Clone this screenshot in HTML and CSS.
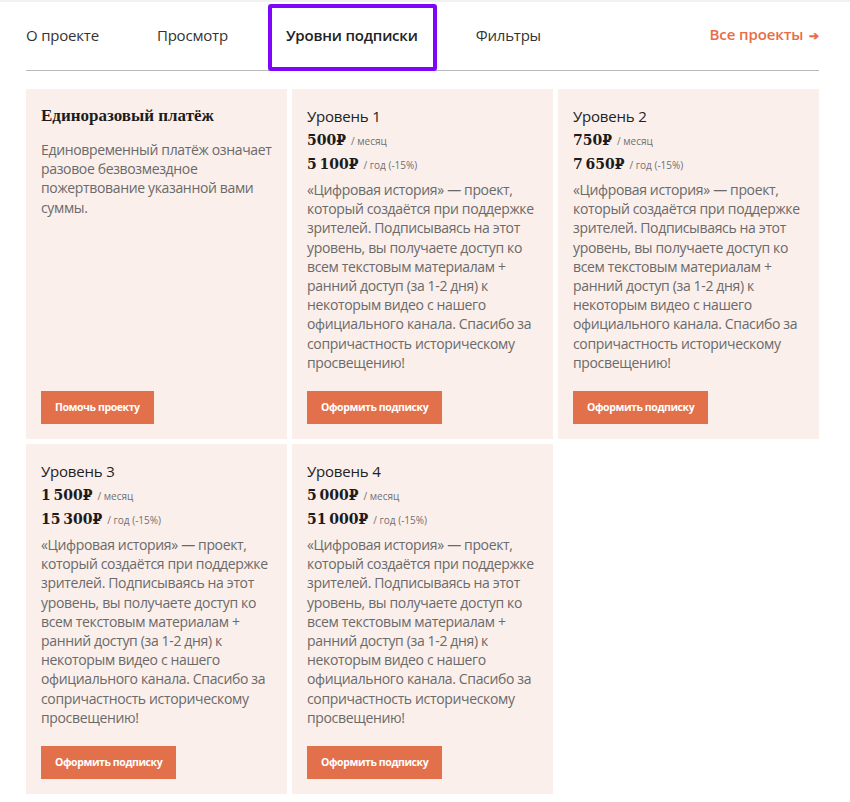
FILE: index.html
```html
<!DOCTYPE html>
<html lang="ru">
<head>
<meta charset="utf-8">
<title>Уровни подписки</title>
<link rel="stylesheet" href="styles.css">
</head>
<body>
<div class="page">
  <nav class="tabs">
    <a class="tab">О проекте</a>
    <a class="tab">Просмотр</a>
    <a class="tab tab-active">Уровни подписки</a>
    <a class="tab">Фильтры</a>
    <a class="tab-all">Все проекты <span class="arrow">➔</span></a>
  </nav>

  <div class="grid">
    <div class="card">
      <h3 class="card-heading">Единоразовый платёж</h3>
      <p class="card-text">Единовременный платёж означает разовое безвозмездное пожертвование указанной вами суммы.</p>
      <a class="btn">Помочь проекту</a>
    </div>

    <div class="card">
      <div class="card-title">Уровень 1</div>
      <div class="price"><b>500₽</b><span class="unit">/ месяц</span></div>
      <div class="price"><b>5&#8239;100₽</b><span class="unit">/ год (-15%)</span></div>
      <p class="card-text">«Цифровая история» — проект, который создаётся при поддержке зрителей. Подписываясь на этот уровень, вы получаете доступ ко всем текстовым материалам + ранний доступ (за 1-2 дня) к некоторым видео с нашего официального канала. Спасибо за сопричастность историческому просвещению!</p>
      <a class="btn">Оформить подписку</a>
    </div>

    <div class="card">
      <div class="card-title">Уровень 2</div>
      <div class="price"><b>750₽</b><span class="unit">/ месяц</span></div>
      <div class="price"><b>7&#8239;650₽</b><span class="unit">/ год (-15%)</span></div>
      <p class="card-text">«Цифровая история» — проект, который создаётся при поддержке зрителей. Подписываясь на этот уровень, вы получаете доступ ко всем текстовым материалам + ранний доступ (за 1-2 дня) к некоторым видео с нашего официального канала. Спасибо за сопричастность историческому просвещению!</p>
      <a class="btn">Оформить подписку</a>
    </div>

    <div class="card">
      <div class="card-title">Уровень 3</div>
      <div class="price"><b>1&#8239;500₽</b><span class="unit">/ месяц</span></div>
      <div class="price"><b>15&#8239;300₽</b><span class="unit">/ год (-15%)</span></div>
      <p class="card-text">«Цифровая история» — проект, который создаётся при поддержке зрителей. Подписываясь на этот уровень, вы получаете доступ ко всем текстовым материалам + ранний доступ (за 1-2 дня) к некоторым видео с нашего официального канала. Спасибо за сопричастность историческому просвещению!</p>
      <a class="btn">Оформить подписку</a>
    </div>

    <div class="card">
      <div class="card-title">Уровень 4</div>
      <div class="price"><b>5&#8239;000₽</b><span class="unit">/ месяц</span></div>
      <div class="price"><b>51&#8239;000₽</b><span class="unit">/ год (-15%)</span></div>
      <p class="card-text">«Цифровая история» — проект, который создаётся при поддержке зрителей. Подписываясь на этот уровень, вы получаете доступ ко всем текстовым материалам + ранний доступ (за 1-2 дня) к некоторым видео с нашего официального канала. Спасибо за сопричастность историческому просвещению!</p>
      <a class="btn">Оформить подписку</a>
    </div>
  </div>
</div>
</body>
</html>
```
FILE: styles.css
```css
html, body {
  margin: 0;
  padding: 0;
  background: #ffffff;
}
body {
  font-family: "Open Sans", "Noto Sans", sans-serif;
  color: #222;
  border-top: 2px solid #f1f1f1;
}
.page {
  padding: 0 31px 0 26px;
}
.tabs {
  display: flex;
  align-items: center;
  gap: 58px;
  height: 69px;
  box-sizing: border-box;
  padding-bottom: 3px;
  border-bottom: 1px solid #b9b9b9;
}
.tab {
  position: relative;
  font-size: 15px;
  line-height: 20px;
  letter-spacing: -0.2px;
  color: #333;
  cursor: pointer;
}
.tab-active {
  font-weight: 600;
  color: #222;
}
.tab-active::after {
  content: "";
  position: absolute;
  left: -18px;
  right: -19px;
  top: -21px;
  bottom: -26px;
  border: 4px solid #7f06fb;
  border-radius: 3px;
}
.tab-all {
  margin-left: auto;
  font-size: 15px;
  line-height: 20px;
  font-weight: 600;
  letter-spacing: -0.1px;
  color: #e86d45;
  cursor: pointer;
}
.arrow {
  font-size: 12px;
  margin-left: 2px;
}
.grid {
  display: grid;
  grid-template-columns: repeat(3, 1fr);
  gap: 5px;
  margin-top: 18px;
}
.card {
  display: flex;
  flex-direction: column;
  align-items: flex-start;
  background: #fbefeb;
  padding: 17px 15px 15px;
}
.card-heading {
  margin: 0 0 8px;
  font-family: "Liberation Serif", "DejaVu Serif", serif;
  font-weight: bold;
  font-size: 17px;
  line-height: 20px;
  color: #1c1c1c;
}
.card-title {
  font-size: 15px;
  line-height: 20px;
  letter-spacing: -0.2px;
  color: #222;
}
.price {
  display: flex;
  align-items: baseline;
  height: 20px;
  margin-top: 4px;
  line-height: 20px;
}
.price b {
  font-family: "DejaVu Serif", "Liberation Serif", serif;
  font-weight: bold;
  font-size: 14px;
  line-height: 20px;
  color: #1c1c1c;
}
.unit {
  font-size: 10px;
  line-height: 20px;
  color: #707070;
  margin-left: 5px;
}
.card-text {
  margin: 6px 0 19px;
  font-size: 14px;
  line-height: 19.2px;
  letter-spacing: -0.35px;
  color: #6a6a6a;
}
.btn {
  margin-top: auto;
  display: inline-block;
  background: #e2704b;
  color: #fff;
  font-weight: 700;
  font-size: 10.5px;
  letter-spacing: -0.4px;
  line-height: 33px;
  padding: 0 14px;
  cursor: pointer;
}
```
